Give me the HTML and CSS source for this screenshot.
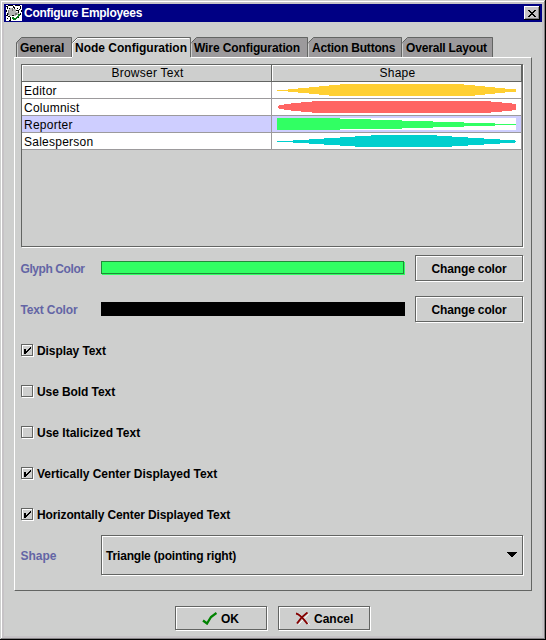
FILE: index.html
```html
<!DOCTYPE html>
<html lang="en">
<head>
<meta charset="utf-8">
<title>Configure Employees</title>
<link rel="stylesheet" href="styles.css">
</head>
<body>
<main class="window">
  <header class="titlebar">
    <svg class="app-icon" width="16" height="16" shape-rendering="crispEdges"><path fill="#fff" d="M0 0h16v16H0z"/><path fill="#b5b5b5" d="M3 3h3v8H3zM6 4h4v7H6zM10 7h3v3h-3z"/><path fill="#737573" d="M2 5h1v5H2zM6 3h1v3H6zM9 8h2v2H9z"/><path fill="#000" d="M0 1h2v1H0zM2 0h5v1H2zM1 2h1v2H1zM3 3h1v1H3zM7 1h1v2H7zM9 0h5v1H9zM8 2h1v2H8zM11 3h1v1h-1zM14 1h1v3h-1zM13 4h1v1h-1zM15 5h1v2h-1zM0 5h1v2H0zM1 8h1v3H1zM2 11h2v1H2zM4 12h1v3H4zM14 8h1v2h-1zM10 5h3v1h-3zM12 6h1v2h-1zM1 13h1v1H1zM3 15h2v1H3zM12 12h1v1h-1zM0 10h1v1H0zM6 10h2v1H6z"/><path fill="#087b18" d="M6 12h2v1h2v-1h1v-1h1v-2h2v2h-1v1h-1v1h-1v1h-1v1H7v-1H6z"/></svg>
    <h1>Configure Employees</h1>
    <button class="close" aria-label="Close"><svg width="8" height="7" shape-rendering="crispEdges"><path d="M0 0h2v1h1v1h2V1h1V0h2v1H7v1H6v1H5v1h1v1h1v1h1v1H6V6H5V5H3v1H2v1H0V6h1V5h1V4h1V3H2V2H1V1H0z"/></svg></button>
  </header>

  <nav class="tabs">
    <div class="tab t1"><svg width="56" height="20"><path class="fill" d="M0 20V6L6 0H56V20Z"/><path class="hi" d="M1.5 20V6.5"/><path class="edge" d="M.5 20V5.5L5.5.5H55.5V20"/></svg><span>General</span></div>
    <div class="tab t2 active"><svg width="119" height="21"><path class="fill" d="M0 21V6L6 0H119V21Z"/><path class="hi" d="M.5 20V6.5L5.5 1.5H117"/><path class="edge" d="M.5 5.5L5.5.5H118.5V20"/></svg><span>Node Configuration</span></div>
    <div class="tab t3"><svg width="117" height="20"><path class="fill" d="M0 20V6L6 0H117V20Z"/><path class="hi" d="M.5 20V6.5"/><path class="edge" d="M.5 5.5L5.5.5H116.5V20"/></svg><span>Wire Configuration</span></div>
    <div class="tab t4"><svg width="94" height="20"><path class="fill" d="M0 20V6L6 0H94V20Z"/><path class="hi" d="M.5 20V6.5"/><path class="edge" d="M.5 5.5L5.5.5H93.5V20"/></svg><span>Action Buttons</span></div>
    <div class="tab t5"><svg width="91" height="20"><path class="fill" d="M0 20V6L6 0H91V20Z"/><path class="hi" d="M.5 20V6.5"/><path class="edge" d="M.5 5.5L5.5.5H90.5V20"/></svg><span>Overall Layout</span></div>
  </nav>

  <section class="panel">
    <div class="table">
      <div class="row head"><div>Browser Text</div><div>Shape</div></div>
      <div class="row"><div>Editor</div><div><svg width="239" height="12" shape-rendering="crispEdges"><path fill="#ffcf31" d="M0 6h11V5h10V4h11V3h10V2h10V1h11V0h124v1h11v1h10v1h10v1h10v1h11v3h-11v1h-10v1h-10v1h-10v1H52v-1H42v-1H32V9H21V8H11V7H0z"/></svg></div></div>
      <div class="row"><div>Columnist</div><div><svg width="239" height="12" shape-rendering="crispEdges"><path fill="#ff6563" d="M1 5h1V4h5V3h7V2h10V1h11V0h179v1h11v1h10v1h4v6h-4v1h-10v1h-11v1H35v-1H24v-1H14V9H7V8H2V7H1z"/></svg></div></div>
      <div class="row selected"><div>Reporter</div><div><svg width="239" height="12" shape-rendering="crispEdges"><path fill="#fff" d="M0 0h240v12H0z"/><path fill="#31ff63" d="M0 0h63v1h31v1h31v1h31v1h31v1h31v1h21v1h-21v1h-31v1h-31v1h-31v1H63v1H0z"/></svg></div></div>
      <div class="row"><div>Salesperson</div><div><svg width="239" height="12" shape-rendering="crispEdges"><path fill="#00cfce" d="M0 6h16V5h16V4h15V3h16V2h15V1h16V0h66v1h15v1h16v1h16v1h16v1h15v1h5v1h-5v1h-15v1h-16v1h-16v1h-16v1H78v-1H63v-1H47V9H32V8H16V7H0z"/></svg></div></div>
    </div>

    <div class="field"><label class="l1">Glyph Color</label><i class="swatch green"></i><button class="metal change"><span>Change color</span></button></div>
    <div class="field"><label class="l2">Text Color</label><i class="swatch black"></i><button class="metal change"><span>Change color</span></button></div>
    <div class="option"><i class="metal box"><svg width="7" height="7" shape-rendering="crispEdges"><path d="M0 2h2v2h1V3h1V2h1V1h1V0h1v2H6v1H5v1H4v1H3v1H2v1H0z"/></svg></i><span class="o1">Display Text</span></div>
    <div class="option"><i class="metal box"></i><span class="o2">Use Bold Text</span></div>
    <div class="option"><i class="metal box"></i><span class="o3">Use Italicized Text</span></div>
    <div class="option"><i class="metal box"><svg width="7" height="7" shape-rendering="crispEdges"><path d="M0 2h2v2h1V3h1V2h1V1h1V0h1v2H6v1H5v1H4v1H3v1H2v1H0z"/></svg></i><span class="o4">Vertically Center Displayed Text</span></div>
    <div class="option"><i class="metal box"><svg width="7" height="7" shape-rendering="crispEdges"><path d="M0 2h2v2h1V3h1V2h1V1h1V0h1v2H6v1H5v1H4v1H3v1H2v1H0z"/></svg></i><span class="o5">Horizontally Center Displayed Text</span></div>
    <div class="field"><label>Shape</label><div class="metal combo"><span>Triangle (pointing right)</span><svg width="10" height="5" shape-rendering="crispEdges"><path d="M0 0h10v1H9v1H8v1H7v1H6v1H4V4H3V3H2V2H1V1H0z"/></svg></div></div>
  </section>

  <footer class="actions">
    <button class="metal action"><svg width="15" height="13"><path d="M1 8.5L5 11.5L9 5L14.5 1" fill="none" stroke="#008200" stroke-width="2.3"/></svg><span>OK</span></button>
    <button class="metal action"><svg width="15" height="13"><path d="M3.5 12.5L14 1.5M4 1.5L14.5 12.5" stroke="#fff"/><path d="M1 1.5Q5 2 12.5 12M12.5 .5Q6 5 2 11.5" fill="none" stroke="#840000" stroke-width="1.8"/></svg><span>Cancel</span></button>
  </footer>
</main>
</body>
</html>
```
FILE: styles.css
```css
* { box-sizing: border-box; }
body { margin: 0; font: bold 12px/14px "Liberation Sans", Arial, sans-serif; color: #000; }
svg { display: block; flex: none; }
button { font: inherit; color: inherit; padding: 0; margin: 0; border-radius: 0; }
.window {
  width: 546px; height: 640px; padding: 4px; background: #cecfce; overflow: hidden;
  box-shadow: inset -1px -1px #000, inset 1px 1px #cecfce, inset -2px -2px #848284, inset 2px 2px #fff, inset 0 0 0 4px #c6c3c6;
}
.titlebar { display: flex; align-items: center; height: 18px; padding: 0 2px; background: #000084; color: #fff; }
.titlebar h1 { flex: 1; margin: 0 0 0 2px; font-size: 12px; line-height: 16px; letter-spacing: -0.28px; white-space: nowrap; }
.close {
  display: flex; justify-content: center; align-items: center; width: 16px; height: 14px; border: 0; background: #c6c3c6;
  box-shadow: inset -1px -1px #000, inset 1px 1px #fff, inset -2px -2px #848284;
}
.tabs { display: flex; height: 20px; margin: 15px 0 0 12px; }
.tab { position: relative; height: 20px; padding: 4px 0 0 4px; white-space: nowrap; }
.tab svg { position: absolute; left: 0; top: 0; }
.tab span { position: relative; }
.tab .fill { fill: #9c9a9c; }
.tab .edge { fill: none; stroke: #636563; }
.tab .hi { fill: none; stroke: #cecfce; }
.active { z-index: 1; }
.active .fill { fill: #cecfce; }
.active .hi { stroke: #fff; }
.t1 { width: 56px; letter-spacing: -0.08px; }
.t2 { width: 119px; padding-left: 3px; }
.t3 { width: 117px; padding-left: 3px; letter-spacing: -0.1px; }
.t4 { width: 94px; letter-spacing: -0.2px; }
.t5 { width: 91px; letter-spacing: -0.18px; }
.panel {
  width: 518px; height: 534px; margin-left: 10px; padding: 6px 8px 0 6px;
  border: 1px solid #636563; border-top-color: #fff; border-left-color: #fff;
}
.table { width: 502px; height: 183px; border: 1px solid #636563; box-shadow: 1px 1px #fff; }
.row { display: grid; grid-template-columns: 250px 250px; height: 17px; background: #fff; font-weight: normal; line-height: 18px; }
.row > div { border-right: 1px solid #9c9a9c; border-bottom: 1px solid #9c9a9c; padding-left: 2px; overflow: hidden; letter-spacing: 0.25px; }
.row svg { margin: 2px 0 0 3px; }
.row.selected { background: #ceceff; }
.row.head { background: #cecfce; text-align: center; }
.row.head > div { padding: 0 0 0 2px; line-height: 17px; border-color: #636563; box-shadow: inset 1px 1px #fff; }
.metal { border: 1px solid #636563; background: #cecfce; box-shadow: inset 1px 1px #fff, 1px 1px #fff; }
.field, .option { display: flex; align-items: center; height: 41px; }
.field label { width: 80px; padding-top: 2px; color: #6365a5; white-space: nowrap; text-indent: -0.5px; }
.l1 { letter-spacing: -0.42px; }
.l2 { letter-spacing: -0.15px; }
.swatch { width: 304px; height: 14px; margin-right: 10px; }
.green { width: 303px; height: 13px; margin-right: 11px; border: 1px solid #218a39; background: #31ff63; box-shadow: 1px 1px #31ff63; }
.black { background: #000; }
.change { width: 108px; height: 26px; padding-top: 2px; letter-spacing: -0.14px; }
.box { width: 12px; height: 12px; padding: 2px; }
.option span { margin-left: 4px; padding-top: 2px; white-space: nowrap; }
.o1, .o2 { letter-spacing: -0.08px; }
.o4 { letter-spacing: -0.03px; }
.o5 { letter-spacing: -0.12px; }
.combo { display: flex; align-items: center; justify-content: space-between; width: 422px; height: 40px; padding: 0 5px 0 4px; letter-spacing: -0.18px; }
.combo span { padding-top: 2px; }
.actions { display: flex; gap: 11px; margin: 15px 0 0 171px; }
.action { display: flex; align-items: center; width: 92px; height: 24px; padding-left: 26px; }
.action + .action { padding-left: 16px; }
.action span { margin-left: 4px; padding-top: 1px; }
```
